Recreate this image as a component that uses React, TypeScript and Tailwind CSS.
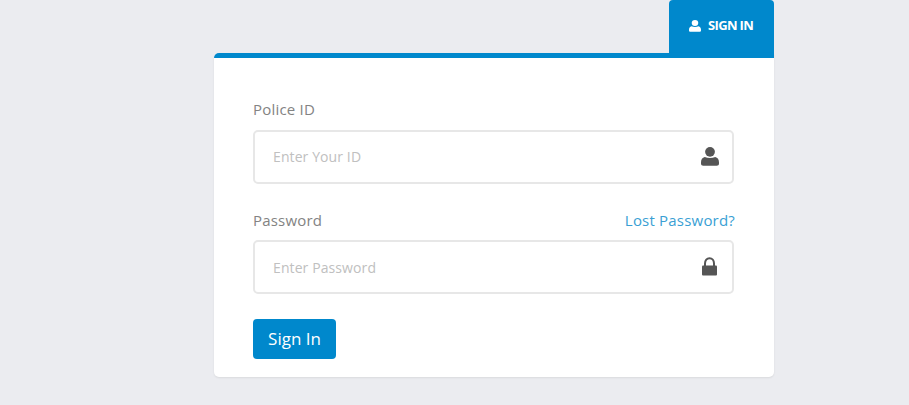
type IconProps = { className: string };

function UserIcon({ className }: IconProps) {
  return (
    <svg className={className} viewBox="0 0 18 20" preserveAspectRatio="none" fill="currentColor" aria-hidden="true">
      <ellipse cx="9" cy="5.1" rx="4.9" ry="5.1" />
      <path d="M3.800 10.500C5.300 11.300 7 11.700 9 11.700s3.700-.4 5.200-1.200c2.500.5 3.800 2.600 3.800 5.800v1.100c0 1.500-.9 2.300-2.300 2.300H2.300C.9 19.700 0 18.900 0 17.400v-1.100c0-3.200 1.300-5.300 3.800-5.800z" />
    </svg>
  );
}

function LockIcon({ className }: IconProps) {
  return (
    <svg className={className} viewBox="0 0 15 19" preserveAspectRatio="none" aria-hidden="true">
      <path d="M3 10V6.500C3 3.300 4.900 1.200 7.500 1.200s4.500 2.100 4.500 5.300V10" fill="none" stroke="currentColor" strokeWidth="2" />
      <rect y="8.500" width="15" height="10" rx="1" fill="currentColor" />
    </svg>
  );
}

export default function App() {
  return (
    <div className="flex h-[405px] w-[909px] flex-col overflow-hidden bg-[#ebecf0] pl-[214px] font-['Open_Sans',sans-serif] text-[#838383]">
      <div className="flex w-[560px] justify-end">
        <div className="flex h-[53px] w-[105px] items-center rounded-t-[4px] bg-[#0088cc] pl-[20px] text-[13px] font-bold tracking-[-0.65px] text-white">
          <UserIcon className="mb-px h-[12px] w-[12px]" />
          <span className="mb-px ml-[7px] whitespace-nowrap">SIGN IN</span>
        </div>
      </div>
      <main className="h-[324px] w-[560px] rounded-b-[5px] rounded-tl-[5px] border-t-[5px] border-[#0088cc] bg-white px-[39px] pt-[41px] shadow-[0_1px_2px_rgba(0,0,0,0.08)]">
        <label className="block h-[31px] text-[15px] leading-[21px] tracking-[0.2px]">Police ID</label>
        <div className="flex h-[54px] w-[481px] items-center justify-between rounded-[5px] border-2 border-[#e7e7e7] pl-[18px] pr-[13px] text-[14px] tracking-[0.1px] text-[#c0c0c0]">
          <span className="mb-[2px]">Enter Your ID</span>
          <UserIcon className="mb-[2px] h-[19px] w-[18px] text-[#555555]" />
        </div>
        <div className="mt-[26px] flex h-[30px] justify-between text-[15px] leading-[21px] tracking-[0.2px]">
          <label>Password</label>
          <a className="text-[#3a9fd4]">Lost Password?</a>
        </div>
        <div className="flex h-[54px] w-[481px] items-center justify-between rounded-[5px] border-2 border-[#e7e7e7] pl-[18px] pr-[15px] text-[14px] tracking-[0.1px] text-[#c0c0c0]">
          <span>Enter Password</span>
          <LockIcon className="mb-[2px] h-[19px] w-[15px] text-[#555555]" />
        </div>
        <button className="mt-[25px] h-[40px] w-[83px] rounded-[4px] bg-[#0088cc] text-[17px] text-white">Sign In</button>
      </main>
    </div>
  );
}
